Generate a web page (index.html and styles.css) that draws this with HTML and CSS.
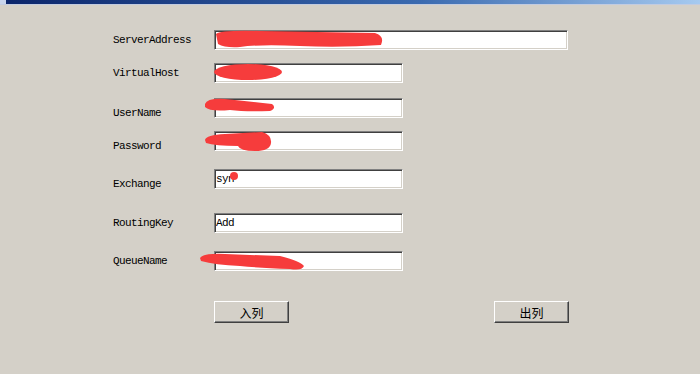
FILE: index.html
```html
<!DOCTYPE html>
<html>
<head>
<meta charset="utf-8">
<link rel="stylesheet" href="styles.css">
</head>
<body>
<div class="titlebar"><span class="sysicon"></span></div>
<main class="form">
  <div class="fields">
    <div class="row"><label class="lbl">ServerAddress</label><input class="tb wide" type="text"></div>
    <div class="row"><label class="lbl">VirtualHost</label><input class="tb" type="text"></div>
    <div class="row"><label class="lbl low">UserName</label><input class="tb" type="text"></div>
    <div class="row"><label class="lbl low">Password</label><input class="tb" type="text"></div>
    <div class="row"><label class="lbl low">Exchange</label><input class="tb" type="text" value="syn"></div>
    <div class="row"><label class="lbl">RoutingKey</label><input class="tb" type="text" value="Add"></div>
    <div class="row"><label class="lbl">QueueName</label><input class="tb" type="text"></div>
  </div>
  <div class="buttons">
    <button class="btn">入列</button>
    <button class="btn">出列</button>
  </div>
</main>
<svg class="redact" width="700" height="374" viewBox="0 0 700 374">
  <path d="M216,34 Q220,30 260,31 L375,33 Q385,36 381,45 Q340,48 300,46 Q260,44 240,47 Q225,48 218,44 Z"/>
  <ellipse cx="248" cy="72" rx="34" ry="8"/>
  <path d="M205,104 Q207,98 225,99 Q245,101 272,104 Q277,108 270,111 Q245,112 230,110 Q210,112 205,107 Z"/>
  <path d="M205,140 Q206,135 225,134 L262,132 Q272,135 271,143 Q270,151 255,151 Q240,151 238,146 Q215,146 206,143 Z"/>
  <circle cx="234" cy="176" r="4"/>
  <path d="M200,258 Q203,253 225,254 L280,256 Q300,261 304,266 Q302,271 290,269 Q260,268 240,266 Q215,265 201,261 Z"/>
</svg>
</body>
</html>
```
FILE: styles.css
```css
html, body {
  margin: 0;
  padding: 0;
  background: #d4d0c8;
  width: 700px;
  height: 374px;
  overflow: hidden;
  position: relative;
  font-family: "Liberation Mono", "DejaVu Sans Mono", monospace;
}
.titlebar {
  height: 4px;
  background: linear-gradient(to right, #0a246a 0%, #3a6ab0 60%, #a6caf0 100%);
  border-bottom: 1px solid #c2cbe0;
  position: relative;
}
.sysicon {
  position: absolute;
  left: 0;
  top: 0;
  width: 6px;
  height: 4px;
  background: #c8d4ec;
}
.form {
  padding: 25px 0 0 113px;
}
.fields {
  display: grid;
  grid-template-rows: 33px 35px 33px 38px 44px 38px 20px;
}
.row {
  display: flex;
  align-items: flex-start;
  height: 20px;
}
.lbl {
  width: 101px;
  height: 20px;
  line-height: 20px;
  font-size: 11px;
  letter-spacing: -0.6px;
  color: #000;
  white-space: nowrap;
}
.lbl.low {
  padding-top: 5px;
}
.tb {
  box-sizing: border-box;
  width: 189px;
  height: 20px;
  margin: 0;
  padding: 0 1px;
  background: #fff;
  border: 1px solid;
  border-color: #808080 #ffffff #ffffff #808080;
  box-shadow: inset 1px 1px #404040, inset -1px -1px #d4d0c8;
  font-family: "Liberation Mono", "DejaVu Sans Mono", monospace;
  font-size: 11px;
  letter-spacing: -0.6px;
  color: #000;
  outline: none;
}
.tb.wide {
  width: 354px;
}
.buttons {
  display: flex;
  gap: 205px;
  padding: 30px 0 0 101px;
}
.btn {
  box-sizing: border-box;
  width: 75px;
  height: 22px;
  margin: 0;
  padding: 0;
  background: #d4d0c8;
  border: 1px solid;
  border-color: #ffffff #404040 #404040 #ffffff;
  box-shadow: inset -1px -1px #808080;
  font-family: "Noto Sans CJK SC", sans-serif;
  font-size: 12px;
  color: #000;
}
.redact {
  position: absolute;
  left: 0;
  top: 0;
  fill: #f63c3c;
  pointer-events: none;
}
```
